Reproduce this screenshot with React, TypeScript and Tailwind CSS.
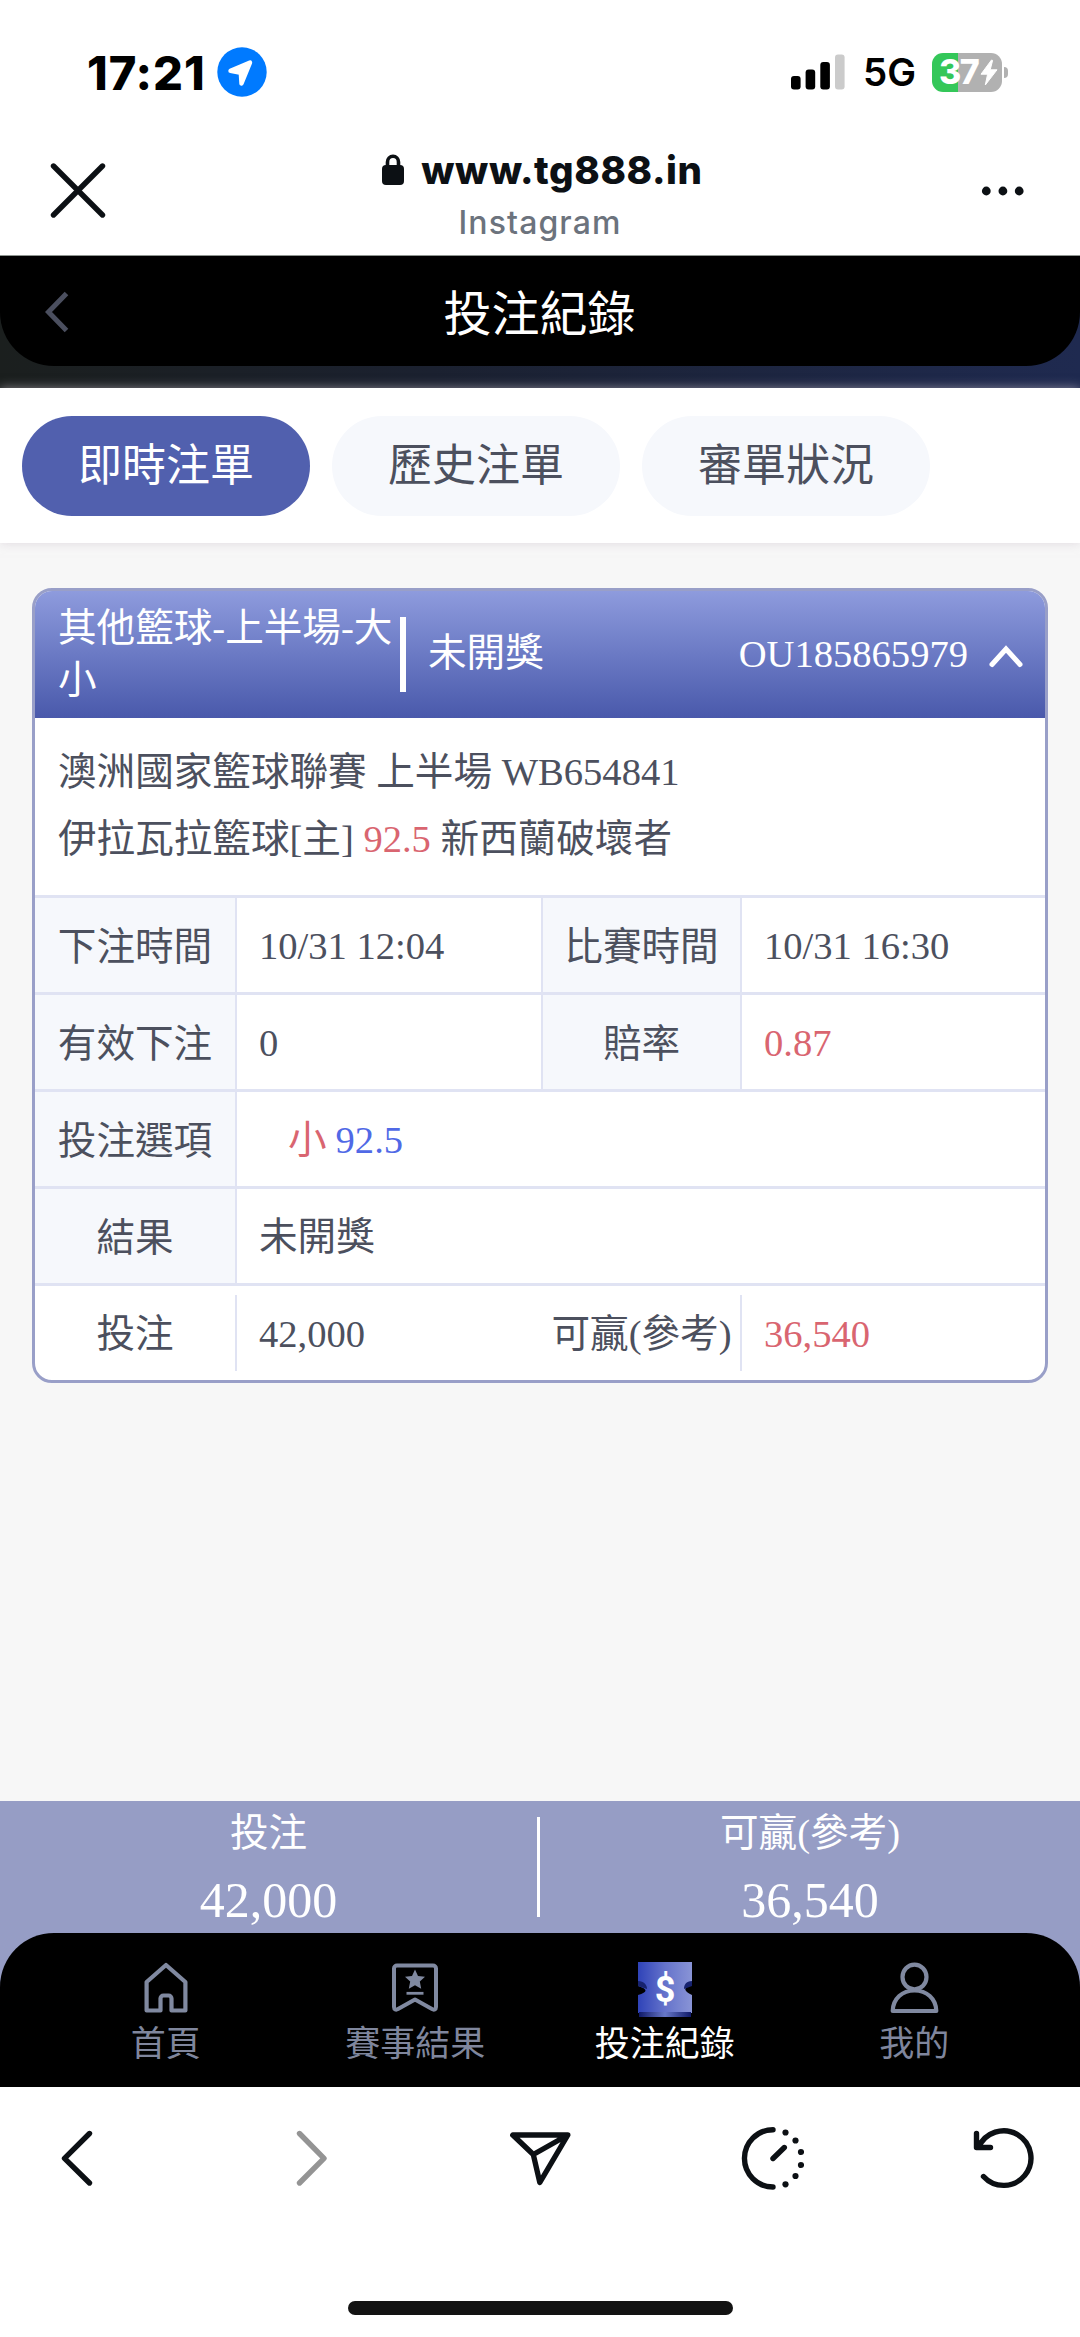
import React from 'react';
import { clsx } from 'clsx';

const serif = "font-['Liberation_Serif','Noto_Sans_CJK_TC',serif]";

/* 系統狀態列 */
const StatusBar: React.FC = () => (
  <div className="flex h-[144px] items-center justify-between pr-[72px] pl-[87px]">
    <div className="flex items-center gap-[9px]">
      <span className="w-[121px] text-[47px] leading-none font-extrabold tracking-[0.9px] whitespace-nowrap text-black">17:21</span>
      <svg width="50" height="50" viewBox="0 0 50 50">
        <circle cx="25" cy="25" r="24.7" fill="#007aff" />
        <path d="M13.5 23.8 33 15.6 24.5 36.5 23.8 25.8Z" fill="#fff" stroke="#fff" strokeWidth="4.4" strokeLinejoin="round" />
      </svg>
    </div>
    <div className="flex items-center">
      <svg width="54" height="36" viewBox="0 0 54 36">
        <rect x="0" y="22" width="9.6" height="13.5" rx="3" />
        <rect x="14.6" y="15.5" width="9.6" height="20" rx="3" />
        <rect x="29.3" y="8" width="9.6" height="27.5" rx="3" />
        <rect x="44" y="0.5" width="9.6" height="35" rx="3" fill="#cbcbcb" />
      </svg>
      <span className="ml-[18px] w-[54px] pt-px text-[38.5px] leading-none font-semibold text-black">5G</span>
      <div className="ml-[15px] flex items-center gap-[2px]">
        <div className="flex h-[39px] w-[70px] items-center rounded-[11px] bg-[linear-gradient(90deg,#34c759_26px,#b1b1b1_26px)] pl-[7px]">
          <span className="w-[41px] text-[34px] leading-none font-extrabold tracking-[-1.5px] text-white">37</span>
          <svg width="18" height="27" viewBox="0 0 18 27" fill="#fff">
            <path d="M11.5 1 1 15.2h6.6L5.3 26 17 10.8h-6.8L12.6 1.4Z" stroke="#fff" strokeWidth="1" strokeLinejoin="round" />
          </svg>
        </div>
        <div className="h-[11px] w-[4px] rounded-r-full bg-[#b1b1b1]" />
      </div>
    </div>
  </div>
);

/* 內嵌瀏覽器網址列 */
const BrowserBar: React.FC = () => (
  <div className="flex h-[112px] items-center justify-between border-b border-[#8e9590] px-[50px]">
    <svg width="56" height="57" viewBox="0 0 56 57" fill="none" stroke="#0c1014" strokeWidth="5.4" strokeLinecap="round" className="mt-[-18px]">
      <path d="M3.5 4 52.5 53M52.5 4 3.5 53" />
    </svg>
    <div className="mt-[-10px] flex flex-col items-center">
      <div className="flex h-[54px] items-center pl-[4px]">
        <svg width="24" height="32" viewBox="0 0 24 32" className="mr-[16px]">
          <rect x="1" y="11" width="22" height="20" rx="4" fill="#0c1014" />
          <path d="M6.5 13V8a5.5 5.7 0 0 1 11 0v5" fill="none" stroke="#0c1014" strokeWidth="3.6" />
        </svg>
        <span className="text-[38.5px] leading-none font-extrabold tracking-[0.6px] text-[#0c1014]">www.tg888.in</span>
      </div>
      <span className="mt-[3px] text-[32px] leading-[46px] font-medium tracking-[1.1px] text-[#6c737d]">Instagram</span>
    </div>
    <svg width="56" height="10" viewBox="0 0 56 10" fill="#0c1014" className="mt-[-18px]">
      <circle cx="12.3" cy="5" r="4.4" />
      <circle cx="28.9" cy="5" r="4.4" />
      <circle cx="45.2" cy="5" r="4.4" />
    </svg>
  </div>
);

const PageHeader: React.FC = () => (
  <div className="h-[132px] bg-[linear-gradient(90deg,#1b1f1e_0%,#1b2130_40%,#1f2a50_100%)]">
    <div className="flex h-[110px] items-center rounded-b-[54px] bg-black px-[44px]">
      <svg width="26" height="42" viewBox="0 0 26 42" fill="none" stroke="#4b4f5f" strokeWidth="5" className="mt-px">
        <path d="M22.5 2.5 4.5 21 22.5 39.5" />
      </svg>
      <h1 className="flex-1 pt-[7px] pr-[27px] text-center text-[48px] leading-none text-white">投注紀錄</h1>
    </div>
  </div>
);

const tabs = ['即時注單', '歷史注單', '審單狀況'];

const Tabs: React.FC = () => (
  <div className="relative flex h-[155px] items-center gap-[22px] bg-white px-[22px] shadow-[0_0_10px_rgba(205,195,205,0.6)]">
    {tabs.map((tab, index) => (
      <button
        key={tab}
        className={clsx(
          'h-[100px] w-[288px] rounded-full pt-[2px] text-[44px] leading-none',
          index === 0 ? 'bg-[#5160ae] text-white' : 'bg-[#f6f8fc] text-[#4c505e]',
        )}
      >
        {tab}
      </button>
    ))}
  </div>
);

const Label: React.FC<{ children: React.ReactNode }> = ({ children }) => (
  <div className="flex items-center justify-center border-r-2 border-[#e0e3f3] bg-[#f6f8fc] pt-[5px]">{children}</div>
);

interface ValueProps {
  children: React.ReactNode;
  className?: string;
}

const Value: React.FC<ValueProps> = ({ children, className }) => (
  <div className={clsx('flex items-center pt-[4px]', className)}>{children}</div>
);

const row = 'grid h-[97px] border-t-[3px] border-[#e0e3f3]';

const BetCard: React.FC = () => (
  <div className="mx-[32px] mt-[45px] overflow-hidden rounded-[20px] border-[3px] border-[#999fc8] bg-white text-[38.6px] text-[#4c505e]">
    <div className="flex h-[127px] items-center bg-linear-to-b from-[#8e9bdd] to-[#4a59ab] pr-[22px] pl-[23px] text-white">
      <div className="mt-[-2px] w-[342px] leading-[52px] break-all">其他籃球-上半場-大小</div>
      <div className="h-[75px] w-[6px] bg-white" />
      <div className="mt-[-2px] ml-[22px]">未開獎</div>
      <div className="ml-auto pt-px">OU185865979</div>
      <svg width="34" height="24" viewBox="0 0 34 24" fill="none" stroke="#fff" strokeWidth="5" strokeLinecap="round" className="mt-[2px] ml-[21px]">
        <path d="M3 20.5 17 5 31 20.5" />
      </svg>
    </div>

    <div className="h-[177px] px-[23px] pt-[21px] leading-[67px]">
      <p>澳洲國家籃球聯賽 上半場 WB654841</p>
      <p>
        伊拉瓦拉籃球[主] <span className="text-[#d96570]">92.5</span> 新西蘭破壞者
      </p>
    </div>

    <div className={clsx(row, 'grid-cols-[202px_306px_199px_1fr]')}>
      <Label>下注時間</Label>
      <Value className="border-r-2 border-[#e0e3f3] pl-[22px]">10/31 12:04</Value>
      <Label>比賽時間</Label>
      <Value className="pl-[22px]">10/31 16:30</Value>
    </div>
    <div className={clsx(row, 'grid-cols-[202px_306px_199px_1fr]')}>
      <Label>有效下注</Label>
      <Value className="border-r-2 border-[#e0e3f3] pl-[22px]">0</Value>
      <Label>賠率</Label>
      <Value className="pl-[22px] text-[#d96570]">0.87</Value>
    </div>
    <div className={clsx(row, 'grid-cols-[202px_1fr]')}>
      <Label>投注選項</Label>
      <Value className="gap-[9px] pl-[51px]">
        <span className="text-[#d96570]">小</span>
        <span className="text-[#5069e6]">92.5</span>
      </Value>
    </div>
    <div className={clsx(row, 'grid-cols-[202px_1fr]')}>
      <Label>結果</Label>
      <Value className="pl-[22px]">未開獎</Value>
    </div>
    <div className={clsx(row, 'grid-cols-[202px_306px_199px_1fr] py-[9px]')}>
      <div className="flex items-center justify-center border-r-2 border-[#e0e3f3] pt-[4px]">投注</div>
      <Value className="pl-[22px]">42,000</Value>
      <div className="flex items-center justify-center border-r-2 border-[#e0e3f3] pt-[4px] whitespace-nowrap">可贏(參考)</div>
      <Value className="pl-[22px] text-[#d96570]">36,540</Value>
    </div>
  </div>
);

const Total: React.FC<{ label: string; value: string }> = ({ label, value }) => (
  <div className="flex flex-col items-center">
    <span className="h-[64px] text-[38.6px] leading-[64px]">{label}</span>
    <span className="text-[50px] leading-[70px]">{value}</span>
  </div>
);

const TotalBar: React.FC = () => (
  <div className="grid h-[132px] grid-cols-[537px_3px_540px] bg-[#969dc5] text-white">
    <Total label="投注" value="42,000" />
    <div className="mt-[16px] h-[100px] bg-white" />
    <Total label="可贏(參考)" value="36,540" />
  </div>
);

const HomeIcon = () => (
  <svg width="54" height="56" viewBox="0 0 54 56" fill="none" stroke="#8089a0" strokeWidth="4.2" strokeLinejoin="round">
    <path d="M27 4 46.4 21V49.5H32.5V37.5a3 3 0 0 0-3-3H24.5a3 3 0 0 0-3 3V49.5H7.6V21Z" />
  </svg>
);

const ResultIcon = () => (
  <svg width="54" height="56" viewBox="0 0 54 56" fill="none" stroke="#8089a0" strokeWidth="4" strokeLinejoin="round">
    <path d="M9 4.5H45a3 3 0 0 1 3 3V46c0 2.5-2 3.2-4 2.1L27 38.5 10 48.1C8 49.2 6 48.5 6 46V7.5a3 3 0 0 1 3-3Z" />
    <path d="M27 8.5 30 15l7 .8-5.2 4.8 1.4 7.2L27 24.2l-6.2 3.6 1.4-7.2L17 15.8l7-.8Z" fill="#8089a0" stroke="none" />
    <path d="M18.5 32.3H35.5" strokeWidth="2.8" />
  </svg>
);

const TicketIcon = () => (
  <svg width="54" height="56" viewBox="0 0 54 56">
    <defs>
      <linearGradient id="ticket">
        <stop stopColor="#2f43b8" />
        <stop offset=".5" stopColor="#6573cb" />
        <stop offset="1" stopColor="#8994d6" />
      </linearGradient>
      <linearGradient id="ticketEdge">
        <stop stopColor="#101a69" />
        <stop offset=".5" stopColor="#6878c8" />
        <stop offset="1" stopColor="#101a69" />
      </linearGradient>
    </defs>
    <path d="M0 1H54V24C45 26 45 30 54 34V52H0V34C10 31 10 28 0 25Z" fill="url(#ticket)" />
    <path d="M0 20C6 20 9 24 9 28L0 25ZM54 20C48 20 46 24 46 28L54 25Z" fill="#17236f" />
    <path d="M1 51H53V56H1Z" fill="url(#ticketEdge)" />
    <text x="27" y="40.5" textAnchor="middle" fill="#fff" fontSize="36" fontWeight="700" fontFamily="Roboto, sans-serif">$</text>
  </svg>
);

const UserIcon = () => (
  <svg width="54" height="56" viewBox="0 0 54 56" fill="none" stroke="#8089a0" strokeWidth="4.2">
    <ellipse cx="27.5" cy="16" rx="12" ry="12.3" />
    <path d="M5.7 50C6 37.5 15.5 29.5 27.5 29.5S49 37.5 49.3 50Z" strokeLinejoin="round" />
  </svg>
);

const navItems = [
  { label: '首頁', icon: HomeIcon },
  { label: '賽事結果', icon: ResultIcon },
  { label: '投注紀錄', icon: TicketIcon, active: true },
  { label: '我的', icon: UserIcon },
];

const BottomNav: React.FC = () => (
  <div className="bg-[#969dc5]">
    <nav className="flex h-[154px] rounded-t-[54px] bg-black px-[41px] pt-[28px]">
      {navItems.map(({ label, icon: Icon, active }) => (
        <div key={label} className="flex flex-1 flex-col items-center">
          <Icon />
          <span className={clsx('mt-[9px] text-[35px] leading-[38px]', active ? 'text-white' : 'text-[#7f869d]')}>{label}</span>
        </div>
      ))}
    </nav>
  </div>
);

/* 瀏覽器底部工具列 */
const BrowserToolbar: React.FC = () => (
  <div className="flex h-[250px] flex-col items-center justify-between bg-white pb-[22px]">
    <div className="flex w-full items-center justify-between px-[45px] pt-[38px]">
      <svg width="64" height="66" viewBox="0 0 64 66" fill="none" stroke="#0c1014" strokeWidth="5.4" strokeLinecap="round" strokeLinejoin="round">
        <path d="M44.5 8.5 19.5 33.3 44.5 58" />
      </svg>
      <svg width="64" height="66" viewBox="0 0 64 66" fill="none" stroke="#949494" strokeWidth="5.4" strokeLinecap="round" strokeLinejoin="round">
        <path d="M22.5 8.5 47 33.3 22.5 58" />
      </svg>
      <svg width="64" height="66" viewBox="0 0 64 66" fill="none" stroke="#0c1014" strokeWidth="5.4" strokeLinejoin="round">
        <path d="M4.8 10H59.8L31.8 57.5 25.3 29.5ZM25.3 29.5 59.8 10" />
      </svg>
      <svg width="64" height="66" viewBox="0 0 64 66" fill="none" stroke="#0c1014" strokeWidth="5.4" strokeLinecap="round">
        <path d="M33 4.7a28.5 28.6 0 0 0 0 57.3M33 33.5 44.3 22.5" />
        <g fill="#0c1014" stroke="none">
          <circle cx="45.5" cy="7.5" r="3.1" />
          <circle cx="55.5" cy="15.5" r="3.1" />
          <circle cx="61" cy="27" r="3.1" />
          <circle cx="61" cy="40" r="3.1" />
          <circle cx="55.5" cy="51" r="3.1" />
          <circle cx="45.5" cy="59.3" r="3.1" />
        </g>
      </svg>
      <svg width="64" height="66" viewBox="0 0 64 66" fill="none" stroke="#0c1014" strokeWidth="5.4" strokeLinecap="round" strokeLinejoin="round">
        <path d="M5.5 8.5V22.5H19.5M7.5 22.5A27.3 27.3 0 1 1 12.5 51.5" />
      </svg>
    </div>
    <div className="h-[14px] w-[385px] rounded-full bg-[#131313]" />
  </div>
);

export default function App() {
  return (
    <div className="flex h-[2337px] w-[1080px] flex-col overflow-hidden bg-white">
      <header className="font-['Inter',sans-serif]">
        <StatusBar />
        <BrowserBar />
      </header>
      <main className={clsx('flex flex-1 flex-col bg-[#f7f7f7]', serif)}>
        <PageHeader />
        <Tabs />
        <BetCard />
        <div className="mt-auto">
          <TotalBar />
          <BottomNav />
        </div>
      </main>
      <BrowserToolbar />
    </div>
  );
}
